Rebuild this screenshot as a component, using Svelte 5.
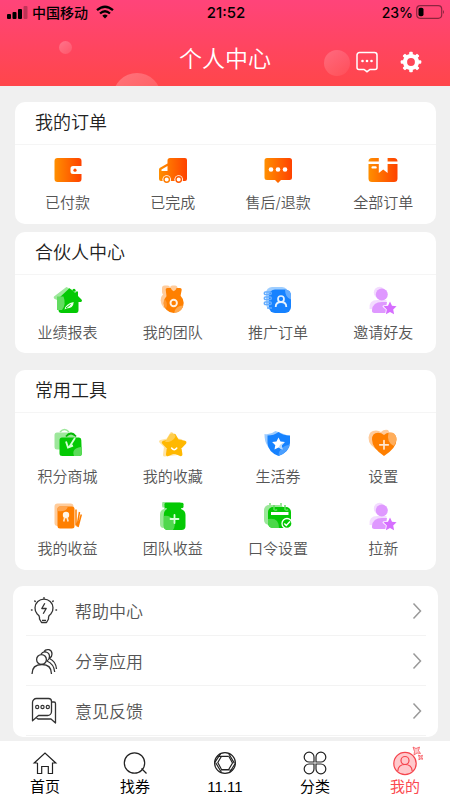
<script>
  const orders = [
    { label: '已付款', icon: 'wallet' },
    { label: '已完成', icon: 'truck' },
    { label: '售后/退款', icon: 'chat' },
    { label: '全部订单', icon: 'box' }
  ];
  const partner = [
    { label: '业绩报表', icon: 'house' },
    { label: '我的团队', icon: 'medal' },
    { label: '推广订单', icon: 'contacts' },
    { label: '邀请好友', icon: 'friend' }
  ];
  const tools = [
    { label: '积分商城', icon: 'bag' },
    { label: '我的收藏', icon: 'star' },
    { label: '生活券', icon: 'shield' },
    { label: '设置', icon: 'heart' },
    { label: '我的收益', icon: 'cards' },
    { label: '团队收益', icon: 'jar' },
    { label: '口令设置', icon: 'calendar' },
    { label: '拉新', icon: 'friend' }
  ];
  const sections = [
    { title: '我的订单', items: orders, kind: 'orders' },
    { title: '合伙人中心', items: partner, kind: 'partner' },
    { title: '常用工具', items: tools, kind: 'tools' }
  ];
  const rows = [
    { label: '帮助中心', icon: 'bulb' },
    { label: '分享应用', icon: 'people' },
    { label: '意见反馈', icon: 'feedback' }
  ];
  const tabs = [
    { label: '首页', icon: 'home' },
    { label: '找券', icon: 'search' },
    { label: '11.11', icon: 'shutter' },
    { label: '分类', icon: 'clover' },
    { label: '我的', icon: 'me' }
  ];
  let active = $state('我的');
</script>

{#snippet gridIcon(name)}
  <svg class="grid-icon" viewBox="0 0 32 32" aria-hidden="true">
    {#if name === 'wallet'}
      <path fill="url(#flame)" d="M5.500 4h21a3 3 0 0 1 3 3v5H21a2.500 2.500 0 0 0-2.500 2.500v3A2.500 2.500 0 0 0 21 20h8.500v5a3 3 0 0 1-3 3h-21a3 3 0 0 1-3-3V7a3 3 0 0 1 3-3z" />
      <circle cx="23" cy="16.200" r="1.600" fill="#ff4d00" />
    {:else if name === 'truck'}
      <path fill="url(#flame)" d="M13 4h15a2 2 0 0 1 2 2v19a2 2 0 0 1-2 2H4a2 2 0 0 1-2-2V15.500a2 2 0 0 1 1-1.700L10.500 9.500V6.500A2.500 2.500 0 0 1 13 4z" />
      <path fill="#fff" d="M4.500 17v-1.500l6-3.500v5z" />
      <circle cx="9.700" cy="25.500" r="4.300" fill="#fff" />
      <circle cx="21.700" cy="25.500" r="4.300" fill="#fff" />
      <circle cx="9.700" cy="25.500" r="2.700" fill="#fff" stroke="#ff7b00" stroke-width="1.400" />
      <circle cx="21.700" cy="25.500" r="2.700" fill="#fff" stroke="#ff5a00" stroke-width="1.400" />
    {:else if name === 'chat'}
      <path fill="url(#flame)" d="M5 4h22.500a2.500 2.500 0 0 1 2.500 2.500v17a2.500 2.500 0 0 1-2.500 2.500H19l-3 3-3-3H5a2.500 2.500 0 0 1-2.500-2.500v-17A2.500 2.500 0 0 1 5 4z" />
      <g fill="#fff"><circle cx="9" cy="15.500" r="2.300" /><circle cx="16" cy="15.500" r="2.300" /><circle cx="23" cy="15.500" r="2.300" /></g>
    {:else if name === 'box'}
      <path fill="url(#flame)" d="M5 4h22a3.500 3.500 0 0 1 3.500 3.500v17A3.500 3.500 0 0 1 27 28H5a3.500 3.500 0 0 1-3.500-3.500v-17A3.500 3.500 0 0 1 5 4z" />
      <path fill="#fff" d="M1 7.600h10.800V3h8.800v4.600H31V10H20.600v9l-4.400-3.400-4.400 3.400v-9H1z" />
      <rect x="4.500" y="12.200" width="5.200" height="2.400" rx="1.200" fill="#fff" />
    {:else if name === 'house'}
      <path fill="#9ee89c" d="M14.400 3 2 12.500q-.8 1 .3 2.200L5 16v8q0 2 2 2h14V6z" />
      <path fill="#04c904" d="M17.400 4.300 6.500 14.500V26q0 3 3 3H24q2.500 0 2.500-3v-8h2.700q1.500-1 .3-2.400L26 12V7.600h-2.600V9z" />
      <circle cx="22" cy="6.300" r="1.500" fill="#04c904" />
      <path fill="#63dc61" d="M5 12.500h6.500q3 8-1.500 13.500H5z" />
      <path fill="#e8ffe8" d="M12.500 25.500q1.200-6 9.200-7.500-.2 6.500-7.200 6.500z" />
      <path stroke="#04c904" fill="none" d="m14 24 4.500-3.500" />
    {:else if name === 'medal'}
      <g fill="#ffcc9c"><circle cx="13.500" cy="16.500" r="9.800" /><rect x="5" y="1.500" width="8" height="9" rx="2.500" /><rect x="13" y="1.500" width="7.500" height="9" rx="2.500" /></g>
      <g fill="#ff8000"><circle cx="16.700" cy="19" r="10" /><path d="M10.500 4h3.300q1.200 3.200 2.900 3.200T19.600 4h3.300q2.200 0 1.700 2.500L23.500 12h-14L8.800 6.500Q8.300 4 10.500 4z" /></g>
      <path fill="#ffa84d" d="M26.300 21.500a9.800 9.800 0 0 1-9 7.300q1-7 9-7.300z" />
      <path fill="#ff9933" d="M7.500 15q4 4 1.500 9.500-4-4.500-1.500-9.500z" />
      <circle cx="16.700" cy="19" r="3.200" fill="#ff8000" stroke="#fff1e2" stroke-width="1.900" />
    {:else if name === 'contacts'}
      <rect x="4" y="3" width="22" height="23" rx="6" fill="#9fceff" />
      <rect x="7" y="5.500" width="22" height="23.500" rx="6" fill="#1682ff" />
      <path fill="#64acff" d="M23 5.500q6 0 6 6v4q-6-2-6-10z" />
      <g fill="none" stroke="#65adff" stroke-width="1.400"><rect x="2.300" y="8" width="7" height="2.500" rx="1" /><rect x="2.300" y="13" width="7" height="2.500" rx="1" /><rect x="2.300" y="18" width="7" height="2.500" rx="1" /><path d="M5 24h5" /></g>
      <circle cx="19" cy="15" r="3" fill="none" stroke="#e5f2ff" stroke-width="1.700" />
      <path d="M13.700 23q0-5 5.300-5t5.300 5" fill="none" stroke="#e5f2ff" stroke-width="1.800" />
    {:else if name === 'friend'}
      <circle cx="12.500" cy="8.500" r="5.700" fill="#f3dcff" />
      <path fill="#f3dcff" d="M2.500 25q-1-9 8-9h9v10z" />
      <circle cx="14.800" cy="10.500" r="6" fill="#df98ff" />
      <path fill="#df98ff" d="M7.500 29q-3 0-2.500-3 .8-8 10-8h5l-1 5 1 6z" />
      <path fill="#d66eff" stroke="#fff" stroke-width="1.600" paint-order="stroke" stroke-linejoin="round" d="m23 17.500 2 4.200 4.600.6-3.400 3.200.9 4.700-4.100-2.200-4.100 2.200.9-4.700-3.400-3.200 4.600-.6z" />
    {:else if name === 'bag'}
      <rect x="2.500" y="4.500" width="20" height="17" rx="2.500" fill="#9de79b" />
      <path d="M8 4q4.500-5 9 0" fill="none" stroke="#9de79b" stroke-width="1.500" />
      <path fill="#04c904" d="M10 9.500h17q2.300 0 2.300 2.500l.5 13.500q0 2.500-2.500 2.500h-17q-2.800 0-2.800-2.500V12q0-2.500 2.500-2.500z" />
      <path d="M14 8.500q5-6 10 0" fill="none" stroke="#04b904" stroke-width="1.800" />
      <path fill="#5bdb59" d="M29.700 19v7q0 2-2.400 2H22q-3-8 7.700-9z" />
      <path d="m23 10-6 9.500M14 13.500l2 6 5-2" fill="none" stroke="#d5ffd5" stroke-width="1.900" />
    {:else if name === 'star'}
      <path fill="#ffe3a2" stroke="#ffe3a2" stroke-width="3" stroke-linejoin="round" d="m14.500 5.500 3 6 6.500 1-5 5 1.500 8-13 1.500 1-8.500-5-5 7-1.500z" />
      <path fill="#ffb800" stroke="#ffb800" stroke-width="3.500" stroke-linejoin="round" d="m17.200 7.500 3.200 5.500 7.300 1.500-5 5.200 1 6.800-6.500-2.800-6.500 2.800.9-6.800-5-5.200 7-1.500z" />
      <path fill="#ffcd4d" d="M13 6q4-2 5.500 2-1 4-7 6H8z" />
      <path d="M14.600 20q2.600 3.500 5.200 0" fill="none" stroke="#fff" stroke-width="1.500" stroke-linecap="round" />
    {:else if name === 'shield'}
      <path fill="#9dccff" d="M2.500 6q6 1 11-3l11 4v9q-3 7-9 10Q2 20 2.500 6z" />
      <path fill="#1682ff" d="M5.500 7.500q6.500 0 11-3.500 4.500 3.500 11.500 3.500V15q-.5 9-11.500 13Q6 24 5.500 15z" />
      <path fill="#4a9fff" d="M27.800 16.500q-1.500 7.500-11.300 11.500 0-9.500 11.300-11.500z" />
      <path fill="#fff" d="m16.500 9.500 2 4 4.400.6-3.200 3.100.8 4.400-4-2.100-4 2.100.8-4.400-3.200-3.100 4.400-.6z" />
      <path fill="#b4d8ff" d="m20.500 15.300 2.400-1.200-3.200 3.100.8 4.400-3.500-1.800q.2-3.200 3.500-4.500z" />
    {:else if name === 'heart'}
      <path fill="#ffcb9b" d="M14 4q3-3 7-2l4 7-11 15Q1 18 1.500 9.500 2 2.500 9 2.500q3 0 5 1.500z" />
      <path fill="#ff7f00" d="M17 7q3-3 7-2.200 5.500 1 5.500 7Q29.500 20 17 28 5 20 5 11.500 5 5 11 4.800q3.500 0 6 2.200z" />
      <path fill="#ffae5c" d="M21.500 5q6-2 8 5 0 4-2.500 8-8-4-5.500-13z" />
      <path d="M17 12.500v8.500M12.800 16.800h8.500" stroke="#ffe7cf" stroke-width="1.700" fill="none" stroke-linecap="round" />
    {:else if name === 'cards'}
      <rect x="2.500" y="3.500" width="19" height="22.500" rx="3" fill="#ffcc9b" />
      <path fill="#ff7f00" d="M8 6.500h12q2.500 0 2.500 2.500v17q0 2.500-2.500 2.500H8q-2.500 0-2.500-2.500V9q0-2.500 2.500-2.500z" />
      <path fill="#ffa550" d="M5.500 9q0-2.500 2.500-2.500h8q-2 6-10.500 4.500z" />
      <path d="M24 9.500v16M27.500 12 25 26.500M29.300 14.500 26 27" fill="none" stroke="#ff7f00" stroke-width="1.500" />
      <circle cx="14" cy="15" r="3.200" fill="#fff5e9" /><path d="m12.700 17.500-1 4m3.400-4 1 4" stroke="#ffe5c9" stroke-width="1.600" />
    {:else if name === 'jar'}
      <path fill="#99e797" d="M5.500 2h18v4H11l-3 22H6.500q-3.500 0-3.500-4v-9.500Q3 10 7 9V7.500H5.500q-1-3 0-5.500z" />
      <path fill="#04c904" d="M9 2.800h16q1.500 0 1.500 1.400v2.600q0 1.400-1.500 1.400H9q-1.500 0-1.500-1.400V4.200Q7.500 2.800 9 2.800z" />
      <path fill="#04c904" d="M10 7h14v2q4.500 1.500 4.500 6v11q0 4-4 4H11q-4.200 0-4.200-4V15q0-4.500 3.200-6z" />
      <path fill="#4fd84d" d="M6.800 16q6.500-1 10.200 4.500 2 5-1 9.500h-5q-4.200 0-4.200-4z" />
      <path d="M17.500 15v8M13.500 19h8" stroke="#d9ffd9" stroke-width="1.800" fill="none" stroke-linecap="round" />
    {:else if name === 'calendar'}
      <rect x="2" y="5" width="20" height="20" rx="5" fill="#9be799" />
      <rect x="6" y="7" width="23" height="21" rx="5" fill="#04c904" />
      <path fill="#4bd849" d="M6 19q11-2 11 9h-6q-5 0-5-5z" />
      <path d="M8 3v3.500M19 3v3.500" stroke="#9be799" stroke-width="2" />
      <path d="M12 5v4.500q2 1.500 3 0M23 5v4.500q2 1.500 3 0" fill="none" stroke="#62dc60" stroke-width="1.500" />
      <path fill="#fff" d="M9 12h17.500v3H9z" />
      <circle cx="25" cy="23.500" r="5" fill="#04c904" stroke="#fff" stroke-width="1.300" />
      <path d="m22.300 23.500 2 2 3.700-4" fill="none" stroke="#fff" stroke-width="1.500" />
    {/if}
  </svg>
{/snippet}

{#snippet rowIcon(name)}
  <svg class="row-icon" viewBox="0 0 28 28" aria-hidden="true">
    {#if name === 'bulb'}
      <path d="M9.500 22v-1.500q0-2-2.300-3.500a9 9 0 1 1 13.600 0q-2.300 1.500-2.300 3.500V22l-2 3.500h-5z M12 23.300h4 M14.800 6.300l-3 5.200h4.400l-3 5.200" />
      <path stroke-width="1.500" d="M13.700 1h.6M4.800 4l.4.400M23.200 4l-.4.400M1.500 13h.5M26 13h.5" stroke-linecap="round" />
    {:else if name === 'people'}
      <path d="M2 27q0-9.500 10-9.500 9.500 0 9.500 9.500" />
      <circle cx="11.500" cy="12.500" r="4.900" />
      <path d="M11 7.300q1.500-3 5-2.300 3.500 1 3.500 4.500 0 3-2.500 4.500 7 3 7.700 11M14 4.500Q15.500 2 19 2.700q3 1 3 4.200 0 3-2.500 4.600Q26 14.500 26.500 22" />
    {:else}
      <path d="M2.500 23.700V5.500a4 4 0 0 1 4-4h12a3 3 0 0 1 3 3v10a4 4 0 0 1-4 4H8.500z M21.500 5h2.500a1.500 1.500 0 0 1 1.500 1.500V26l-4.500-4H8l-2-1.500" />
      <g stroke-width="1.200"><circle cx="7.200" cy="10" r="1.600" /><circle cx="12.500" cy="10" r="1.600" /><circle cx="17.800" cy="10" r="1.600" /></g>
    {/if}
  </svg>
{/snippet}

{#snippet tabIcon(name)}
  <svg class="tab-icon" viewBox="0 0 36 36" aria-hidden="true">
    {#if name === 'home'}
      <path d="M10.500 18H7.200L18 8l10.800 10h-3.300v10.500h-4.200v-7h-6.600v7h-4.200v-10.500" />
    {:else if name === 'search'}
      <circle cx="17.500" cy="18" r="10.200" /><path d="m24.500 23.500 5 5" />
    {:else if name === 'shutter'}
      <circle cx="18" cy="18" r="10.400" />
      <path d="M10.200 11.300h11.600M21.500 8.300l5.800 9.800M28.200 18.500 22.300 28M25.500 25H14M14.500 27.500 8.700 17.700M7.800 17.300l6-9" />
      <path d="m14.500 11.300-3.700 6.200 3.700 7h7.200l3.800-6.500-3.700-6.700" />
    {:else if name === 'clover'}
      <path d="M17 17v-4.800A4.900 4.900 0 1 0 12.200 17zM19 17v-4.800a4.900 4.900 0 1 1 4.800 4.800zM17 19v4.800A4.900 4.900 0 1 1 12.200 19zM19 19v4.800a4.900 4.900 0 1 0 4.800-4.800z" />
    {:else}
      <circle cx="18" cy="18.500" r="11.200" fill="#ffc9cc" />
      <circle cx="18" cy="15.500" r="4" /><path d="M10.800 26q.5-6.500 7.200-6.500t7.200 6.500" />
      <path class="spark" d="m26 2 3 1.500L32.500 2 31.500 5.500 33.500 8.500 30 8 27 10 27.500 6.500zM31.500 10l2 1 2-.7-.7 2 1 2-2-.5-2 1 .5-2z" />
    {/if}
  </svg>
{/snippet}

<svg class="defs" aria-hidden="true">
  <defs>
    <linearGradient id="flame" x1="0" y1="0" x2="1" y2="0"><stop offset="0" stop-color="#ff8f00" /><stop offset="1" stop-color="#ff4200" /></linearGradient>
  </defs>
</svg>

<div class="page">
  <header>
    <i class="bubble small"></i><i class="bubble half"></i><i class="bubble mid"></i>
    <div class="status">
      <div class="carrier">
        <svg width="21" height="14" viewBox="0 0 21 14" aria-hidden="true"><rect x="0" y="9" width="4" height="5" rx="1" /><rect x="5.500" y="7" width="4" height="7" rx="1" /><rect x="11" y="4" width="4" height="10" rx="1" /><rect x="16.500" y="1" width="4" height="13" rx="1" opacity=".25" /></svg>
        <span>中国移动</span>
        <svg width="18" height="14" viewBox="0 0 18 14" aria-hidden="true"><g fill="none" stroke="#000" stroke-width="2.300"><path d="M1 5.200q8-7 16 0M4 8.500q5-4.500 10 0" /></g><path d="M6.300 10.700q2.700-2.200 5.400 0L9 13.500z" /></svg>
      </div>
      <time>21:52</time>
      <div class="battery">
        <span>23%</span>
        <svg width="29" height="14" viewBox="0 0 29 14" aria-hidden="true"><rect x=".7" y=".7" width="25" height="12.600" rx="3.500" fill="none" stroke="#000" stroke-opacity=".45" stroke-width="1.200" /><rect x="2.500" y="2.700" width="5" height="8.600" rx="1.800" /><path d="M27 5q2 2 0 4z" opacity=".45" /></svg>
      </div>
    </div>
    <div class="bar">
      <h1>个人中心</h1>
      <div class="actions">
        <button aria-label="消息">
          <svg width="24" height="24" viewBox="0 0 24 24" aria-hidden="true"><path d="M4.500 2.500h15a2.500 2.500 0 0 1 2.500 2.500v12.500a2 2 0 0 1-2 2h-5L12 21.700l-3-2.200H4a2 2 0 0 1-2-2V5a2.500 2.500 0 0 1 2.500-2.500z" fill="none" stroke="#fff" stroke-width="1.500" /><g fill="#fff"><circle cx="7.500" cy="11" r="1.300" /><circle cx="12" cy="11" r="1.300" /><circle cx="16.500" cy="11" r="1.300" /></g></svg>
        </button>
        <button aria-label="设置">
          <svg width="24" height="24" viewBox="0 0 24 24" aria-hidden="true"><circle cx="12" cy="12" r="6" fill="none" stroke="#fff" stroke-width="4.200" /><g fill="#fff">{#each [0, 45, 90, 135, 180, 225, 270, 315] as a}<rect x="10.200" y="1.700" width="3.600" height="4" rx="1" transform="rotate({a} 12 12)" />{/each}</g></svg>
        </button>
      </div>
    </div>
  </header>

  <main>
    {#each sections as s}
      <section class="card {s.kind}">
        <h2>{s.title}</h2>
        <div class="grid">
          {#each s.items as item}
            <button class="cell">{@render gridIcon(item.icon)}<span>{item.label}</span></button>
          {/each}
        </div>
      </section>
    {/each}
    <section class="list">
      {#each rows as r}
        <a class="row" href="#{r.icon}">
          {@render rowIcon(r.icon)}
          <span>{r.label}</span>
          <svg class="chevron" viewBox="0 0 10 18" aria-hidden="true"><path d="m1.500 1.500 7 7.500-7 7.500" /></svg>
        </a>
      {/each}
    </section>
  </main>

  <nav>
    {#each tabs as t}
      <a class="tab" class:active={active === t.label} href="#{t.icon}" onclick={() => (active = t.label)}>
        {@render tabIcon(t.icon)}<span>{t.label}</span>
      </a>
    {/each}
  </nav>
</div>

<style>
  :global(body) {
    background: #f0f0f0;
  }
  .page {
    display: flex;
    flex-direction: column;
    min-height: 100vh;
    background: #f0f0f0;
    color: #222;
    font-family: Inter, "Noto Sans CJK SC", sans-serif;
    font-weight: 350;
  }
  .defs {
    display: block;
    width: 0;
    height: 0;
  }
  svg {
    flex: none;
  }
  button {
    margin: 0;
    padding: 0;
    border: 0;
    background: none;
    color: inherit;
    font: inherit;
    cursor: pointer;
  }
  a {
    color: inherit;
    text-decoration: none;
  }
  header {
    position: relative;
    overflow: hidden;
    height: 86px;
    background: linear-gradient(#ff447a, #ff464a);
  }
  .bubble {
    position: absolute;
    border-radius: 50%;
    background: linear-gradient(135deg, #ffffff40, #ffffff18);
  }
  .small {
    left: 13%;
    top: 41px;
    width: 13px;
    height: 13px;
  }
  .half {
    left: 25%;
    top: 73px;
    width: 48px;
    height: 48px;
  }
  .mid {
    left: 72%;
    top: 50px;
    width: 26px;
    height: 26px;
    background: linear-gradient(135deg, #ffffff33, #ffffff0c);
  }
  .status {
    position: relative;
    display: grid;
    grid-template-columns: 1fr auto 1fr;
    align-items: center;
    height: 24px;
    padding: 0 5px 0 7px;
    color: #000;
    font-size: 14px;
    font-weight: 500;
  }
  time {
    font-size: 15px;
  }
  .carrier,
  .battery {
    display: flex;
    align-items: center;
    gap: 4px;
  }
  .carrier svg:last-child {
    margin-left: 4px;
  }
  .battery {
    justify-content: flex-end;
    gap: 3px;
  }
  .bar {
    position: relative;
    display: flex;
    align-items: center;
    justify-content: center;
    height: 70px;
    color: #fff;
  }
  h1 {
    margin: 0;
    font-size: 23px;
    font-weight: 350;
    line-height: 34px;
  }
  .actions {
    position: absolute;
    right: 27px;
    top: 26px;
    display: flex;
    gap: 20px;
  }
  .actions svg {
    display: block;
  }
  main {
    display: flex;
    flex-direction: column;
    padding: 16px 12px 4px 13px;
  }
  .card {
    margin: 0 2px 8px;
    border-radius: 10px;
    background: #fff;
  }
  .partner {
    margin-bottom: 17px;
  }
  .tools {
    margin-bottom: 16px;
  }
  h2 {
    margin: 0;
    padding-left: 20px;
    border-bottom: 1px solid #f5f5f5;
    font-size: 18px;
    font-weight: 350;
    line-height: 42px;
  }
  .grid {
    display: grid;
    grid-template-columns: repeat(4, 1fr);
    row-gap: 12px;
    padding: 9px 0 10px;
  }
  .partner .grid {
    padding-bottom: 9px;
  }
  .tools .grid {
    padding-top: 15px;
  }
  .cell {
    display: flex;
    flex-direction: column;
    align-items: center;
    gap: 6px;
    color: #555;
    font-size: 15px;
    line-height: 22px;
  }
  .grid-icon {
    width: 32px;
    height: 32px;
  }
  .list {
    padding: 0 12px 1px 13px;
    border-radius: 10px;
    background: #fff;
  }
  .row {
    display: flex;
    align-items: center;
    height: 49px;
    padding: 0 4px;
    border-bottom: 1px solid #f3f3f3;
    color: #555;
    font-size: 17px;
  }
  .row span {
    flex: 1;
    margin-left: 17px;
  }
  .row-icon {
    width: 28px;
    height: 28px;
    fill: none;
    stroke: #333;
    stroke-width: 1.3;
    stroke-linejoin: round;
  }
  .chevron {
    width: 10px;
    height: 18px;
    fill: none;
    stroke: #999;
    stroke-width: 1.5;
  }
  nav {
    position: sticky;
    bottom: 0;
    display: flex;
    height: 59px;
    margin-top: auto;
    background: #fff;
  }
  .tab {
    display: flex;
    flex: 1;
    flex-direction: column;
    align-items: center;
    padding-top: 4px;
    color: #000;
    font-family: "Liberation Sans", "Noto Sans CJK SC", sans-serif;
    font-size: 15px;
    font-weight: 400;
    line-height: 16px;
  }
  .tab-icon {
    width: 36px;
    height: 36px;
    margin-bottom: -2px;
    fill: none;
    stroke: #222;
    stroke-width: 1.2;
  }
  .active {
    color: #fb4a50;
  }
  .active .tab-icon {
    stroke: #f5444c;
  }
  .spark {
    fill: #ffc9cc;
    stroke-width: 0.7;
  }
</style>
